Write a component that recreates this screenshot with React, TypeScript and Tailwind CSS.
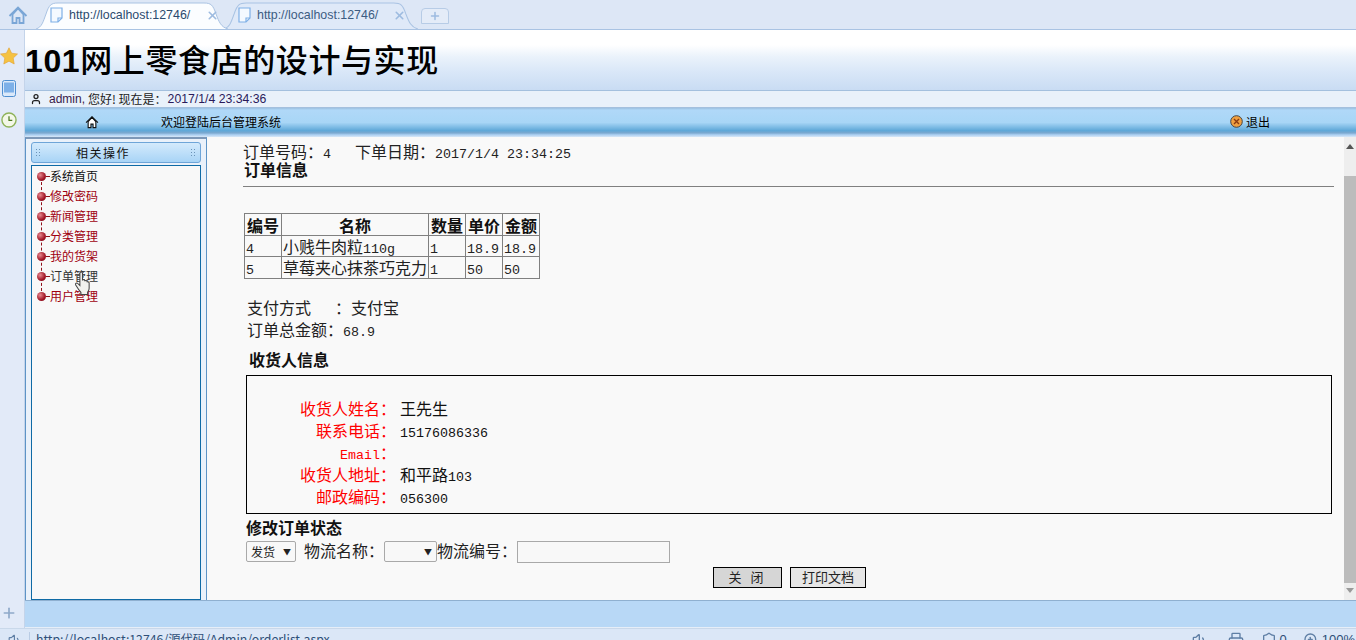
import { Plus, Printer, Shield, User, Volume1, X, ZoomIn } from 'lucide-react'

const cjk = "font-['Noto_Sans_CJK_SC','Liberation_Sans',sans-serif]"
const num = "font-['Liberation_Mono',monospace] text-[13.33px] leading-none"

const menu = [
  { label: '系统首页', color: 'text-[#111111]' },
  { label: '修改密码', color: 'text-[#a00010]' },
  { label: '新闻管理', color: 'text-[#a00010]' },
  { label: '分类管理', color: 'text-[#a00010]' },
  { label: '我的货架', color: 'text-[#a00010]' },
  { label: '订单管理', color: 'text-[#333333]' },
  { label: '用户管理', color: 'text-[#a00010]' },
]

function PageIcon() {
  return (
    <svg width="13" height="16" viewBox="0 0 13 16" fill="none" stroke="#7fb0e6" strokeWidth="1.2">
      <path d="M1 1h11v10l-4 4H1z" fill="#f4f9ff" />
      <path d="M12 11H8v4" />
    </svg>
  )
}

function HouseIcon({ size, stroke, fill, weight }: { size: number; stroke: string; fill: string; weight: string }) {
  return (
    <svg width={size} height={size} viewBox="0 0 20 20" fill={fill} stroke={stroke} strokeWidth={weight}>
      <path d="M4.500 9.500V18h4v-5h3v5h4V9.500L10 3.500z" />
      <path d="M1.500 11L10 2.500 18.500 11" fill="none" />
    </svg>
  )
}

function Tab({ active }: { active?: boolean }) {
  return (
    <div className={active ? 'relative z-10 flex h-[27px] w-[192px] items-center pl-[14px]' : 'relative -ml-[4px] flex h-[27px] w-[194px] items-center pl-[14px]'}>
      <svg className="absolute inset-0 h-full w-full" viewBox="0 0 192 27" preserveAspectRatio="none">
        <path
          d="M0 27 C6 25 7 20 10 12 C13 3 15 1 22 1 H168 C175 1 177 3 180 12 C183 20 185 25 192 27"
          fill={active ? '#fbfdff' : '#dfe9f8'}
          stroke="#a9c3e3"
        />
      </svg>
      <span className="relative flex items-center">
        <PageIcon />
        <span className={`ml-[6px] w-[122px] overflow-hidden whitespace-nowrap font-['Liberation_Sans',sans-serif] text-[12.400px] ${active ? 'text-[#2b4a6e]' : 'text-[#3c5c82]'}`}>
          http://localhost:12746/
        </span>
        <X size={13} strokeWidth={3} className={active ? 'ml-[15px] text-[#9dbbe0]' : 'ml-[14px] text-[#9dbbe0]'} />
      </span>
    </div>
  )
}

function TabBar() {
  return (
    <div className="flex h-[30px] shrink-0 items-end border-b border-[#a9c3e3] bg-[#dde7f6] pl-[5px]">
      <div className="mb-[4px] mr-[5px] flex w-[26px] justify-center">
        <HouseIcon size={20} stroke="#7aa6d6" fill="none" weight="1.800" />
      </div>
      <Tab active />
      <Tab />
      <div className="mb-[5px] ml-[3px] flex h-[16px] w-[28px] items-center justify-center rounded-t-[4px] border border-[#b7cce6] bg-[#e4ecf8]">
        <Plus size={12} strokeWidth={3} className="text-[#9dbbe0]" />
      </div>
    </div>
  )
}

function SideRail() {
  return (
    <div className="flex w-[25px] shrink-0 flex-col items-start border-r border-[#c4d4ea] bg-[#e2eaf8]">
      <svg className="mt-[17px]" width="18" height="18" viewBox="0 0 18 18">
        <path d="M9 .8l2.600 5.400 5.900.8-4.300 4.100 1 5.900L9 14.200 3.800 17l1-5.900L.5 7l5.900-.8z" fill="#f5c242" stroke="#e0a030" strokeWidth=".6" />
      </svg>
      <svg className="ml-[2px] mt-[15px]" width="14" height="17" viewBox="0 0 14 17">
        <rect x=".5" y=".5" width="13" height="16" rx="2" fill="#dbe9fa" stroke="#4f8fd0" />
        <rect x="2" y="2.500" width="10" height="10" fill="#7db0e8" />
      </svg>
      <svg className="ml-[1px] mt-[15px]" width="16" height="16" viewBox="0 0 17 17">
        <circle cx="8.500" cy="8.500" r="7.500" fill="#f4f8e8" stroke="#8fb35a" strokeWidth="1.500" />
        <path d="M8.500 4.500v4.500h3.500" fill="none" stroke="#4d7a20" strokeWidth="1.300" />
      </svg>
      <Plus size={16} strokeWidth={2.500} className="mb-[7px] ml-[1px] mt-auto text-[#8fa9c9]" />
    </div>
  )
}

function Grip() {
  return (
    <svg width="5" height="8" viewBox="0 0 5 8" fill="#6b93b8">
      <rect x="0" y="0" width="1" height="1" />
      <rect x="3" y="0" width="1" height="1" />
      <rect x="0" y="3" width="1" height="1" />
      <rect x="3" y="3" width="1" height="1" />
      <rect x="0" y="6" width="1" height="1" />
      <rect x="3" y="6" width="1" height="1" />
    </svg>
  )
}

function Sidebar() {
  return (
    <aside className={`flex w-[182px] shrink-0 flex-col border-x border-[#5d93c6] border-t-2 border-t-[#7d98b8] bg-[#eaf1fa] px-[5px] pt-[3px] ${cjk}`}>
      <div className="flex h-[21px] shrink-0 items-center justify-between rounded-[3px] border border-[#6ea5d8] bg-gradient-to-b from-[#d4eafc] to-[#a8d4f6] px-[4px]">
        <Grip />
        <span className="mr-[26px] text-[12px] tracking-[1.500px] text-[#111111]">相关操作</span>
        <Grip />
      </div>
      <div className="relative mt-[2px] flex-1 border border-[#0f6aa5] bg-[#f8f8f8] pl-[5px]">
        <div className="absolute bottom-[303px] left-[9px] top-[11px] border-l border-dashed border-[#90101a]" />
        {menu.map((item) => (
          <div key={item.label} className="relative flex h-[20px] items-center">
            <span className="h-[9px] w-[9px] rounded-full bg-[radial-gradient(circle_at_35%_35%,#e88a90,#a01525_60%,#7a0a18)]" />
            <span className="w-[4px] border-t border-dashed border-[#90101a]" />
            <span className={`text-[12px] leading-none ${item.color}`}>{item.label}</span>
          </div>
        ))}
        {/* mouse cursor caught in the screenshot */}
        <svg className="absolute left-[42px] top-[105px]" width="18" height="25" viewBox="0 0 17 24">
          <path
            d="M5.500 2c0-1.500 2.500-1.500 2.500 0v7c0-1 2.200-1 2.200 0v.8c0-1 2.200-1 2.200 0v1c0-.8 2-.8 2 .4v5.300c0 2-1 3-1.500 4v2H6.500v-2C5 19 3 16 1.500 13.500c-.8-1.500 1-2.500 2-1.500l2 2z"
            fill="#f1f1ee"
            stroke="#444444"
            strokeWidth="1"
          />
        </svg>
      </div>
    </aside>
  )
}

function OrderTable() {
  const head = 'border border-[#808080] p-0 text-center text-[16px] font-bold leading-[20px] text-[#111111]'
  const cell = 'border border-[#808080] px-[1px] py-0 text-left text-[16px] leading-[20px] whitespace-nowrap'
  return (
    <table className="ml-[1px] mt-[26px] w-[295px] table-fixed border-collapse">
      <thead>
        <tr className="h-[22px]">
          <th className={`${head} w-[37px]`}>编号</th>
          <th className={`${head} w-[147px]`}>名称</th>
          <th className={`${head} w-[37px]`}>数量</th>
          <th className={`${head} w-[37px]`}>单价</th>
          <th className={`${head} w-[37px]`}>金额</th>
        </tr>
      </thead>
      <tbody>
        <tr className="h-[21px]">
          <td className={cell}><span className={num}>4</span></td>
          <td className={cell}>小贱牛肉粒<span className={num}>110g</span></td>
          <td className={cell}><span className={num}>1</span></td>
          <td className={cell}><span className={num}>18.9</span></td>
          <td className={cell}><span className={num}>18.9</span></td>
        </tr>
        <tr className="h-[21px]">
          <td className={cell}><span className={num}>5</span></td>
          <td className={cell}>草莓夹心抹茶巧克力</td>
          <td className={cell}><span className={num}>1</span></td>
          <td className={cell}><span className={num}>50</span></td>
          <td className={cell}><span className={num}>50</span></td>
        </tr>
      </tbody>
    </table>
  )
}

function ReceiverRow({ label, children, latin }: { label: string; children?: React.ReactNode; latin?: boolean }) {
  return (
    <div className="flex h-[22px] items-baseline">
      <span className="w-[149px] whitespace-nowrap text-right text-[#ff0000]">
        {latin ? <span className={num}>{label}</span> : label}：
      </span>
      <span className="ml-[4px] text-[#111111]">{children}</span>
    </div>
  )
}

function FakeSelect({ text, width }: { text?: string; width: string }) {
  return (
    <div className={`mt-[4px] flex h-[21px] items-center justify-between rounded-[2px] border border-[#a9a9a9] bg-[#f8f8f8] px-[4px] text-[12px] text-[#222222] ${width}`}>
      <span>{text}</span>
      <span className="text-[8px] text-[#222222]">▼</span>
    </div>
  )
}

function OrderPanel() {
  return (
    <div className={`min-w-0 flex-1 overflow-hidden bg-[#f9f9f9] pl-[36px] pr-[10px] pt-[5px] text-[16px] leading-[18px] text-[#222222] ${cjk}`}>
      <div className="h-[17px] whitespace-nowrap">
        订单号码：<span className={num}>4</span>
        <span className="ml-[24px]">下单日期：</span>
        <span className={num}>2017/1/4 23:34:25</span>
      </div>
      <div className="h-[20px] pl-[1px] font-bold leading-[20px] text-[#111111]">订单信息</div>
      <div className="mt-[7px] border-t border-[#808080]" />
      <OrderTable />
      <div className="ml-[4px] mt-[18px] flex h-[20px] items-center whitespace-nowrap">
        <span className="w-[72px]">支付方式</span>
        <span className="ml-[16px]">：支付宝</span>
      </div>
      <div className="ml-[4px] mt-[2px] h-[20px] whitespace-nowrap leading-[20px]">
        订单总金额：<span className={num}>68.9</span>
      </div>
      <div className="ml-[6px] mt-[10px] h-[20px] font-bold leading-[20px] text-[#111111]">收货人信息</div>
      <div className="ml-[3px] mt-[6px] h-[139px] w-[1086px] border border-black pt-[23px]">
        <ReceiverRow label="收货人姓名">王先生</ReceiverRow>
        <ReceiverRow label="联系电话"><span className={num}>15176086336</span></ReceiverRow>
        <ReceiverRow label="Email" latin />
        <ReceiverRow label="收货人地址">和平路<span className={num}>103</span></ReceiverRow>
        <ReceiverRow label="邮政编码"><span className={num}>056300</span></ReceiverRow>
      </div>
      <div className="ml-[3px] mt-[3px] h-[20px] font-bold leading-[20px] text-[#111111]">修改订单状态</div>
      <div className="ml-[3px] mt-[2px] flex h-[22px] items-center whitespace-nowrap">
        <FakeSelect text="发货" width="w-[50px]" />
        <span className="ml-[8px] w-[80px]">物流名称：</span>
        <FakeSelect width="w-[53px]" />
        <span className="w-[80px]">物流编号：</span>
        <input readOnly className="mt-[4px] h-[22px] w-[153px] border border-[#a9a9a9] bg-[#f8f8f8]" />
      </div>
      <div className="ml-[470px] mt-[6px] flex gap-[8px] text-[13px] text-[#222222]">
        <button className="h-[21px] w-[69px] border border-black bg-[#d6d6d6] tracking-[3px]">关 闭</button>
        <button className="h-[21px] w-[76px] border border-black bg-[#e6e6e6]">打印文档</button>
      </div>
    </div>
  )
}

function Scrollbar() {
  return (
    <div className="flex w-[12px] shrink-0 flex-col items-center bg-[#eeeeee]">
      <span className="mt-[7px] h-0 w-0 border-x-[4px] border-b-[5px] border-x-transparent border-b-[#555555]" />
      <div className="mt-[27px] h-[407px] w-full bg-[#bcbcbc]" />
      <span className="mt-[5px] h-0 w-0 border-x-[4px] border-t-[5px] border-x-transparent border-t-[#9a9a9a]" />
    </div>
  )
}

function StatusBar() {
  return (
    <div className="flex h-[12px] shrink-0 items-start overflow-hidden border-t border-[#c9d8ea] bg-[#dbe7f7] pt-[3px] font-['Liberation_Sans',sans-serif] text-[13px] leading-[15px] text-[#2f4f78]">
      <div className="flex w-[30px] justify-center border-r border-[#b9cce4] pt-[1px]">
        <Volume1 size={14} className="text-[#5f7fa5]" />
      </div>
      <span className={`ml-[6px] text-[12.300px] ${cjk}`}>http://localhost:12746/源代码/Admin/orderlist.aspx</span>
      <div className="ml-auto flex items-start pr-[1px]">
        <Volume1 size={16} className="text-[#5f7fa5]" />
        <Printer size={16} className="ml-[20px] text-[#5f7fa5]" />
        <Shield size={16} className="ml-[17px] text-[#5f7fa5]" />
        <span className="ml-[3px]">0</span>
        <ZoomIn size={16} className="ml-[16px] text-[#5f7fa5]" />
        <span className="ml-[3px]">100%</span>
      </div>
    </div>
  )
}

export default function App() {
  return (
    <div className="flex h-[640px] w-[1356px] flex-col overflow-hidden bg-[#dde7f6]">
      <TabBar />
      <div className="flex min-h-0 flex-1">
        <SideRail />
        <div className="flex min-w-0 flex-1 flex-col">
          <header className="flex h-[60px] shrink-0 items-center bg-[linear-gradient(#ffffff_0%,#ffffff_25%,#eaf2fb_45%,#d9e7f8_70%,#c9dcf3_100%)] pt-[2px] font-['Liberation_Sans','Noto_Sans_CJK_SC',sans-serif] text-[32px] font-medium tracking-[0.600px] text-[#000000]">
            <span className="font-bold">101</span>网上零食店的设计与实现
          </header>
          <div className={`flex h-[18px] shrink-0 items-center border-y border-[#a4c0de] bg-[#e9f1fa] pl-[5px] text-[12px] text-[#222222] ${cjk}`}>
            <User size={12} strokeWidth={2.500} className="text-[#222222]" />
            <span className="ml-[7px] font-['Liberation_Sans',sans-serif] text-[#3a1a4a]">admin,</span>
            <span className="ml-[3px]">您好! 现在是：</span>
            <span className="ml-[1px] font-['Liberation_Sans',sans-serif] text-[12.250px] text-[#2a1a5a]">2017/1/4 23:34:36</span>
          </div>
          <nav className={`flex h-[29px] shrink-0 items-center bg-[linear-gradient(#9cc0e0_0%,#b0d8f8_7%,#a8d6f6_50%,#5fa8d8_78%,#7ca8cf_86%,#a8cdf0_92%,#d8e8f8_100%)] pb-[2px] text-[12px] text-[#000000] ${cjk}`}>
            <span className="ml-[60px]">
              <HouseIcon size={14} stroke="#111111" fill="#ffffff" weight="1.600" />
            </span>
            <span className="ml-[62px]">欢迎登陆后台管理系统</span>
            <span className="ml-auto flex items-center pr-[86px]">
              <svg width="13" height="13" viewBox="0 0 13 13">
                <circle cx="6.500" cy="6.500" r="5.800" fill="#f0a040" stroke="#444444" />
                <path d="M4 4l5 5M9 4l-5 5" stroke="#8a3a10" strokeWidth="1.400" />
              </svg>
              <span className="ml-[3px]">退出</span>
            </span>
          </nav>
          <main className="flex min-h-0 flex-1 border-b border-[#8fb0d0]">
            <Sidebar />
            <OrderPanel />
            <Scrollbar />
          </main>
          <div className="h-[27px] shrink-0 border-b border-[#e6eef8] bg-[#b8d8f6]" />
        </div>
      </div>
      <StatusBar />
    </div>
  )
}
